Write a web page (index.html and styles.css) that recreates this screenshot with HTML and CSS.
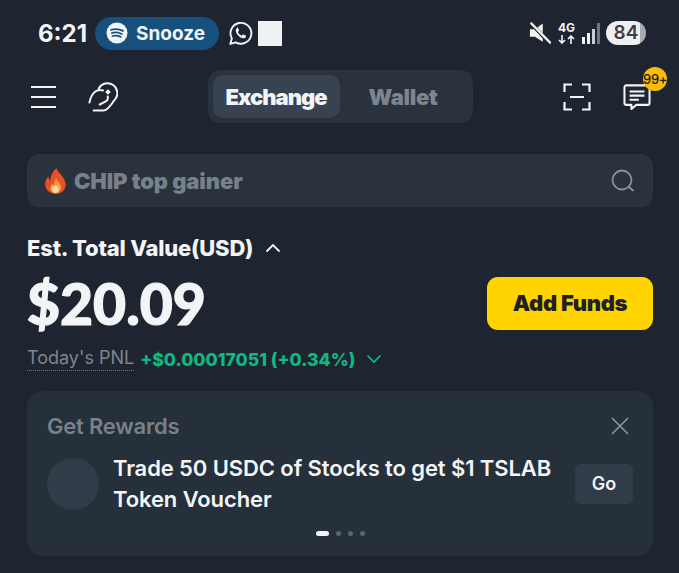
FILE: index.html
```html
<!DOCTYPE html>
<html lang="en">
<head>
    <meta charset="UTF-8">
    <meta name="viewport" content="width=device-width, initial-scale=1.0">
    <title>Exchange</title>
    <link rel="stylesheet" href="styles.css">
</head>
<body>
    <div class="status-bar">
        <div class="status-left">
            <span class="clock">6:21</span>
            <div class="snooze">
                <svg class="spotify" viewBox="0 0 22 22">
                    <circle cx="11" cy="11" r="10.5" fill="#f2f4f6"/>
                    <path d="M5 7.8c4-1.1 8.500-.8 12 1.100M5.800 11c3.400-.9 7-.6 10 1M6.500 14c2.800-.7 5.700-.5 8.200.9" fill="none" stroke="#15507f" stroke-width="1.800" stroke-linecap="round"/>
                </svg>
                <span>Snooze</span>
            </div>
            <svg class="whatsapp" viewBox="0 0 24 24">
                <path d="M2.200 22l1.500-5.300A10 10 0 1 1 7.500 20.500z" fill="none" stroke="#f2f4f6" stroke-width="1.800" stroke-linejoin="round"/>
                <path d="M8.800 6.800c-1.300.8-1.600 2.200-1 3.900 1 2.600 3 4.700 5.600 5.700 1.700.6 3.100.2 3.800-1.100.3-.6.200-1-.3-1.300l-2-1c-.4-.2-.7-.1-1 .2l-.7.900c-1.700-.7-3-2-3.700-3.600l.8-.8c.3-.3.300-.6.200-1l-.9-2c-.2-.4-.5-.5-.8-.2z" fill="#f2f4f6"/>
            </svg>
            <div class="white-box"></div>
        </div>
        <div class="status-right">
            <svg class="mute" viewBox="0 0 24 24">
                <path d="M1 8h5.500L15 1.500v20L6.500 16H1z" fill="#f2f4f6"/>
                <path d="M3 2.500l19 20" stroke="#1e2530" stroke-width="4"/>
                <path d="M2.500 1.500L23 22.500" stroke="#f2f4f6" stroke-width="2.400" stroke-linecap="round"/>
            </svg>
            <div class="net">
                <span class="net-label">4G</span>
                <svg class="net-arrows" viewBox="0 0 17 9">
                    <path d="M4 0v8M1 5l3 3 3-3M13 9V1M10 4l3-3 3 3" fill="none" stroke="#f2f4f6" stroke-width="1.600"/>
                </svg>
            </div>
            <svg class="signal" viewBox="0 0 21 22">
                <rect x="0" y="15" width="3" height="7" fill="#f2f4f6"/>
                <rect x="5" y="11" width="3" height="11" fill="#f2f4f6"/>
                <rect x="10" y="7" width="3" height="15" fill="#c9ccd0"/>
                <rect x="15" y="1" width="3" height="21" fill="#70767e"/>
            </svg>
            <div class="battery">84</div>
        </div>
    </div>

    <div class="nav">
        <div class="nav-left">
            <div class="burger"><i></i><i></i><i></i></div>
            <svg class="hand" viewBox="0 0 32 32">
                <path d="M1.500 22C3 15 6 11 9 9.500c2-1 4.500-1.300 7-.5M11.500 7A10.500 10.500 0 1 1 28.500 19M6 30.500h10.500c3.500 0 8-5.500 11.500-11M12.500 24l6-3c2.500-1.300 3.200-3.200 2.500-5.500" fill="none" stroke="#f2f4f6" stroke-width="2.100" stroke-linecap="round" stroke-linejoin="round"/>
                <path d="M21.300 7.700l3 3-3 3-3-3z" fill="#f2f4f6"/>
            </svg>
        </div>
        <div class="tabs">
            <div class="tab tab-active">Exchange</div>
            <div class="tab">Wallet</div>
        </div>
        <div class="nav-right">
            <svg class="scan" viewBox="0 0 28 28">
                <path d="M9 1.500H1.500V9M19 1.500h7.500V9M9 26.500H1.500V19M19 26.500h7.500V19M7 14h14" fill="none" stroke="#f2f4f6" stroke-width="2.200"/>
            </svg>
            <div class="msg">
                <svg class="msg-icon" viewBox="0 0 30 28">
                    <path d="M3.500 1.500h23a2 2 0 0 1 2 2v17a2 2 0 0 1-2 2H14l-5 4.500v-4.500H3.500a2 2 0 0 1-2-2v-17a2 2 0 0 1 2-2z" fill="none" stroke="#f2f4f6" stroke-width="2.200" stroke-linejoin="round"/>
                    <path d="M7 8h16M7 12.500h16M7 17h10" stroke="#f2f4f6" stroke-width="2.200"/>
                </svg>
                <span class="badge">99+</span>
            </div>
        </div>
    </div>

    <div class="search">
        <div class="search-text">
            <svg class="fire" viewBox="0 0 24 28">
                <path d="M13 0c1 5 9 9 10 17 .5 6-4.500 11-11 11S0 23 1 16c.5-3 2-5 3.500-7 0 2 .5 4 2 5C6 9 9 4 13 0z" fill="#e8502a"/>
                <path d="M13 11c.5 3 5 5 5 10 0 3-2.500 6-6 6s-6-3-5.500-6c.3-2 1.500-3 2.500-4 .3 1 .8 1.500 1.500 2 0-3 1-6 2.500-8z" fill="#f9a03a"/>
                <ellipse cx="12" cy="23" rx="3.500" ry="4" fill="#f6d9a0"/>
            </svg>
            <span>CHIP top gainer</span>
        </div>
        <svg class="search-icon" viewBox="0 0 24 24">
            <circle cx="11" cy="11" r="9.500" fill="none" stroke="#8a919c" stroke-width="1.800"/>
            <path d="M18 18l4 3.500" stroke="#8a919c" stroke-width="1.800" stroke-linecap="round"/>
        </svg>
    </div>

    <div class="balance">
        <div class="est">
            <span>Est. Total Value(USD)</span>
            <svg class="chev" viewBox="0 0 16 10"><path d="M1.500 8.500L8 2l6.500 6.500" fill="none" stroke="#f2f4f6" stroke-width="1.800"/></svg>
        </div>
        <div class="value-row">
            <div class="value">$20.09</div>
            <button class="add-funds">Add Funds</button>
        </div>
        <div class="pnl">
            <span class="pnl-label">Today's PNL</span>
            <span class="pnl-value">+$0.00017051 (+0.34%)</span>
            <svg class="chev-down" viewBox="0 0 16 10"><path d="M1.500 1.500L8 8l6.500-6.500" fill="none" stroke="#0fb981" stroke-width="1.700"/></svg>
        </div>
    </div>

    <div class="card">
        <div class="card-head">
            <span class="card-title">Get Rewards</span>
            <svg class="close" viewBox="0 0 18 18"><path d="M1 1l16 16M17 1L1 17" stroke="#8a919c" stroke-width="1.700"/></svg>
        </div>
        <div class="card-body">
            <div class="avatar"></div>
            <div class="card-text">Trade 50 USDC of Stocks to get $1 TSLAB Token Voucher</div>
            <div class="go">Go</div>
        </div>
        <div class="dots">
            <i class="dot dot-active"></i><i class="dot"></i><i class="dot"></i><i class="dot"></i>
        </div>
    </div>
</body>
</html>
```

FILE: styles.css
```css
* {
    box-sizing: border-box;
}
body {
    margin: 0;
    height: 573px;
    overflow: hidden;
    padding: 0 26px 0 27px;
    background-color: #1e2530;
    color: #f2f4f6;
    font-family: Inter, "Liberation Sans", sans-serif;
}
svg {
    display: block;
    flex: none;
}

/* status bar */
.status-bar {
    display: flex;
    justify-content: space-between;
    align-items: center;
    height: 34px;
    margin-top: 16px;
    padding: 0 7px 0 11px;
}
.status-left, .status-right {
    display: flex;
    align-items: center;
}
.clock {
    width: 50px;
    font-size: 24px;
    font-weight: 700;
}
.snooze {
    display: flex;
    align-items: center;
    gap: 8px;
    width: 124px;
    height: 33px;
    margin-left: 7px;
    padding-left: 11px;
    border-radius: 17px;
    background-color: #15507f;
    font-size: 19px;
    font-weight: 700;
}
.spotify {
    width: 22px;
    height: 22px;
}
.whatsapp {
    width: 25px;
    height: 25px;
    margin-left: 9px;
}
.white-box {
    width: 24px;
    height: 25px;
    margin-left: 5px;
    background-color: #f0f1f2;
}
.mute {
    width: 22px;
    height: 22px;
}
.net {
    margin-left: 7px;
    width: 18px;
}
.net-label {
    display: block;
    font-size: 12px;
    font-weight: 700;
    line-height: 12px;
}
.net-arrows {
    width: 17px;
    height: 9px;
    margin-top: 1px;
}
.signal {
    width: 21px;
    height: 22px;
    margin-left: 6px;
}
.battery {
    width: 40px;
    height: 24px;
    margin-left: 3px;
    border-radius: 12px;
    background: linear-gradient(to right, #eeeff0 85%, #a9abae 85%);
    color: #3a3e44;
    font-size: 19px;
    font-weight: 600;
    line-height: 24px;
    text-align: center;
}

/* top nav */
.nav {
    display: grid;
    grid-template-columns: 1fr auto 1fr;
    align-items: center;
    margin-top: 20px;
}
.nav-left, .nav-right {
    display: flex;
    align-items: center;
}
.nav-left {
    gap: 32px;
    padding-left: 4px;
}
.nav-right {
    justify-content: flex-end;
    gap: 32px;
    padding-right: 2px;
}
.burger {
    display: flex;
    flex-direction: column;
    gap: 8px;
    width: 25px;
}
.burger i {
    height: 2px;
    background-color: #f2f4f6;
}
.hand {
    width: 30px;
    height: 30px;
}
.tabs {
    display: flex;
    width: 265px;
    height: 53px;
    padding: 5px;
    border-radius: 12px;
    background-color: #29323d;
}
.tab {
    display: flex;
    justify-content: center;
    align-items: center;
    width: 127px;
    border-radius: 10px;
    color: #7e858f;
    font-size: 22px;
    font-weight: 900;
    letter-spacing: -.3px;
}
.tab-active {
    background-color: #384351;
    color: #f2f4f6;
    letter-spacing: -1px;
}
.scan {
    width: 28px;
    height: 28px;
}
.msg {
    position: relative;
}
.msg-icon {
    width: 28px;
    height: 26px;
}
.badge {
    position: absolute;
    top: -17px;
    right: -16px;
    width: 24px;
    height: 24px;
    border-radius: 50%;
    background-color: #fbbc05;
    color: #1e1a0c;
    font-size: 13px;
    font-weight: 500;
    letter-spacing: -.3px;
    line-height: 24px;
    text-align: center;
}

/* search */
.search {
    display: flex;
    justify-content: space-between;
    align-items: center;
    height: 53px;
    margin-top: 31px;
    padding: 0 18px 0 17px;
    border-radius: 12px;
    background-color: #29323d;
}
.search-text {
    display: flex;
    align-items: center;
    gap: 7px;
    color: #78808b;
    font-size: 22px;
    font-weight: 900;
    letter-spacing: -.1px;
}
.fire {
    width: 23px;
    height: 26px;
}
.search-icon {
    width: 24px;
    height: 24px;
}

/* balance */
.balance {
    margin-top: 29px;
}
.est {
    display: flex;
    align-items: center;
    gap: 12px;
    font-size: 22px;
    font-weight: 800;
    letter-spacing: -.2px;
    line-height: 24px;
}
.chev {
    width: 16px;
    height: 10px;
}
.value-row {
    display: flex;
    justify-content: space-between;
    align-items: center;
    margin-top: 8px;
}
.value {
    font-family: Lato, Inter, sans-serif;
    font-size: 57px;
    font-weight: 900;
    line-height: 70px;
    -webkit-text-stroke: 1.2px #f2f4f6;
}
.add-funds {
    width: 166px;
    height: 53px;
    border: none;
    border-radius: 11px;
    background-color: #ffd400;
    color: #1f2022;
    font-family: inherit;
    font-size: 22px;
    font-weight: 900;
    letter-spacing: -.3px;
}
.pnl {
    display: flex;
    align-items: center;
    margin-top: 9px;
}
.pnl-label {
    padding-bottom: 2px;
    border-bottom: 1px dotted #6f7680;
    color: #7e858f;
    font-size: 18px;
}
.pnl-value {
    margin-left: 6px;
    color: #0fb981;
    font-size: 17.6px;
    font-weight: 800;
}
.chev-down {
    width: 16px;
    height: 10px;
    margin-left: 10px;
}

/* rewards card */
.card {
    height: 165px;
    margin-top: 20px;
    padding: 22px 20px 0;
    border-radius: 16px;
    background-color: #25303b;
}
.card-head {
    display: flex;
    justify-content: space-between;
    align-items: center;
    padding-right: 4px;
}
.card-title {
    color: #78808b;
    font-size: 22px;
    font-weight: 600;
    letter-spacing: -.2px;
}
.close {
    width: 18px;
    height: 18px;
}
.card-body {
    display: flex;
    align-items: center;
    margin-top: 14px;
}
.avatar {
    flex: none;
    width: 52px;
    height: 52px;
    border-radius: 50%;
    background-color: #323b48;
}
.card-text {
    width: 445px;
    margin-left: 14px;
    font-size: 22px;
    font-weight: 600;
    letter-spacing: -.1px;
    line-height: 31px;
}
.go {
    width: 58px;
    height: 40px;
    margin-left: auto;
    border-radius: 6px;
    background-color: #323b48;
    font-size: 18px;
    font-weight: 600;
    line-height: 40px;
    text-align: center;
}
.dots {
    display: flex;
    justify-content: center;
    align-items: center;
    gap: 7px;
    margin-top: 16px;
}
.dot {
    width: 5px;
    height: 5px;
    border-radius: 50%;
    background-color: #5c6470;
}
.dot-active {
    width: 13px;
    border-radius: 3px;
    background-color: #f2f4f6;
}
```
